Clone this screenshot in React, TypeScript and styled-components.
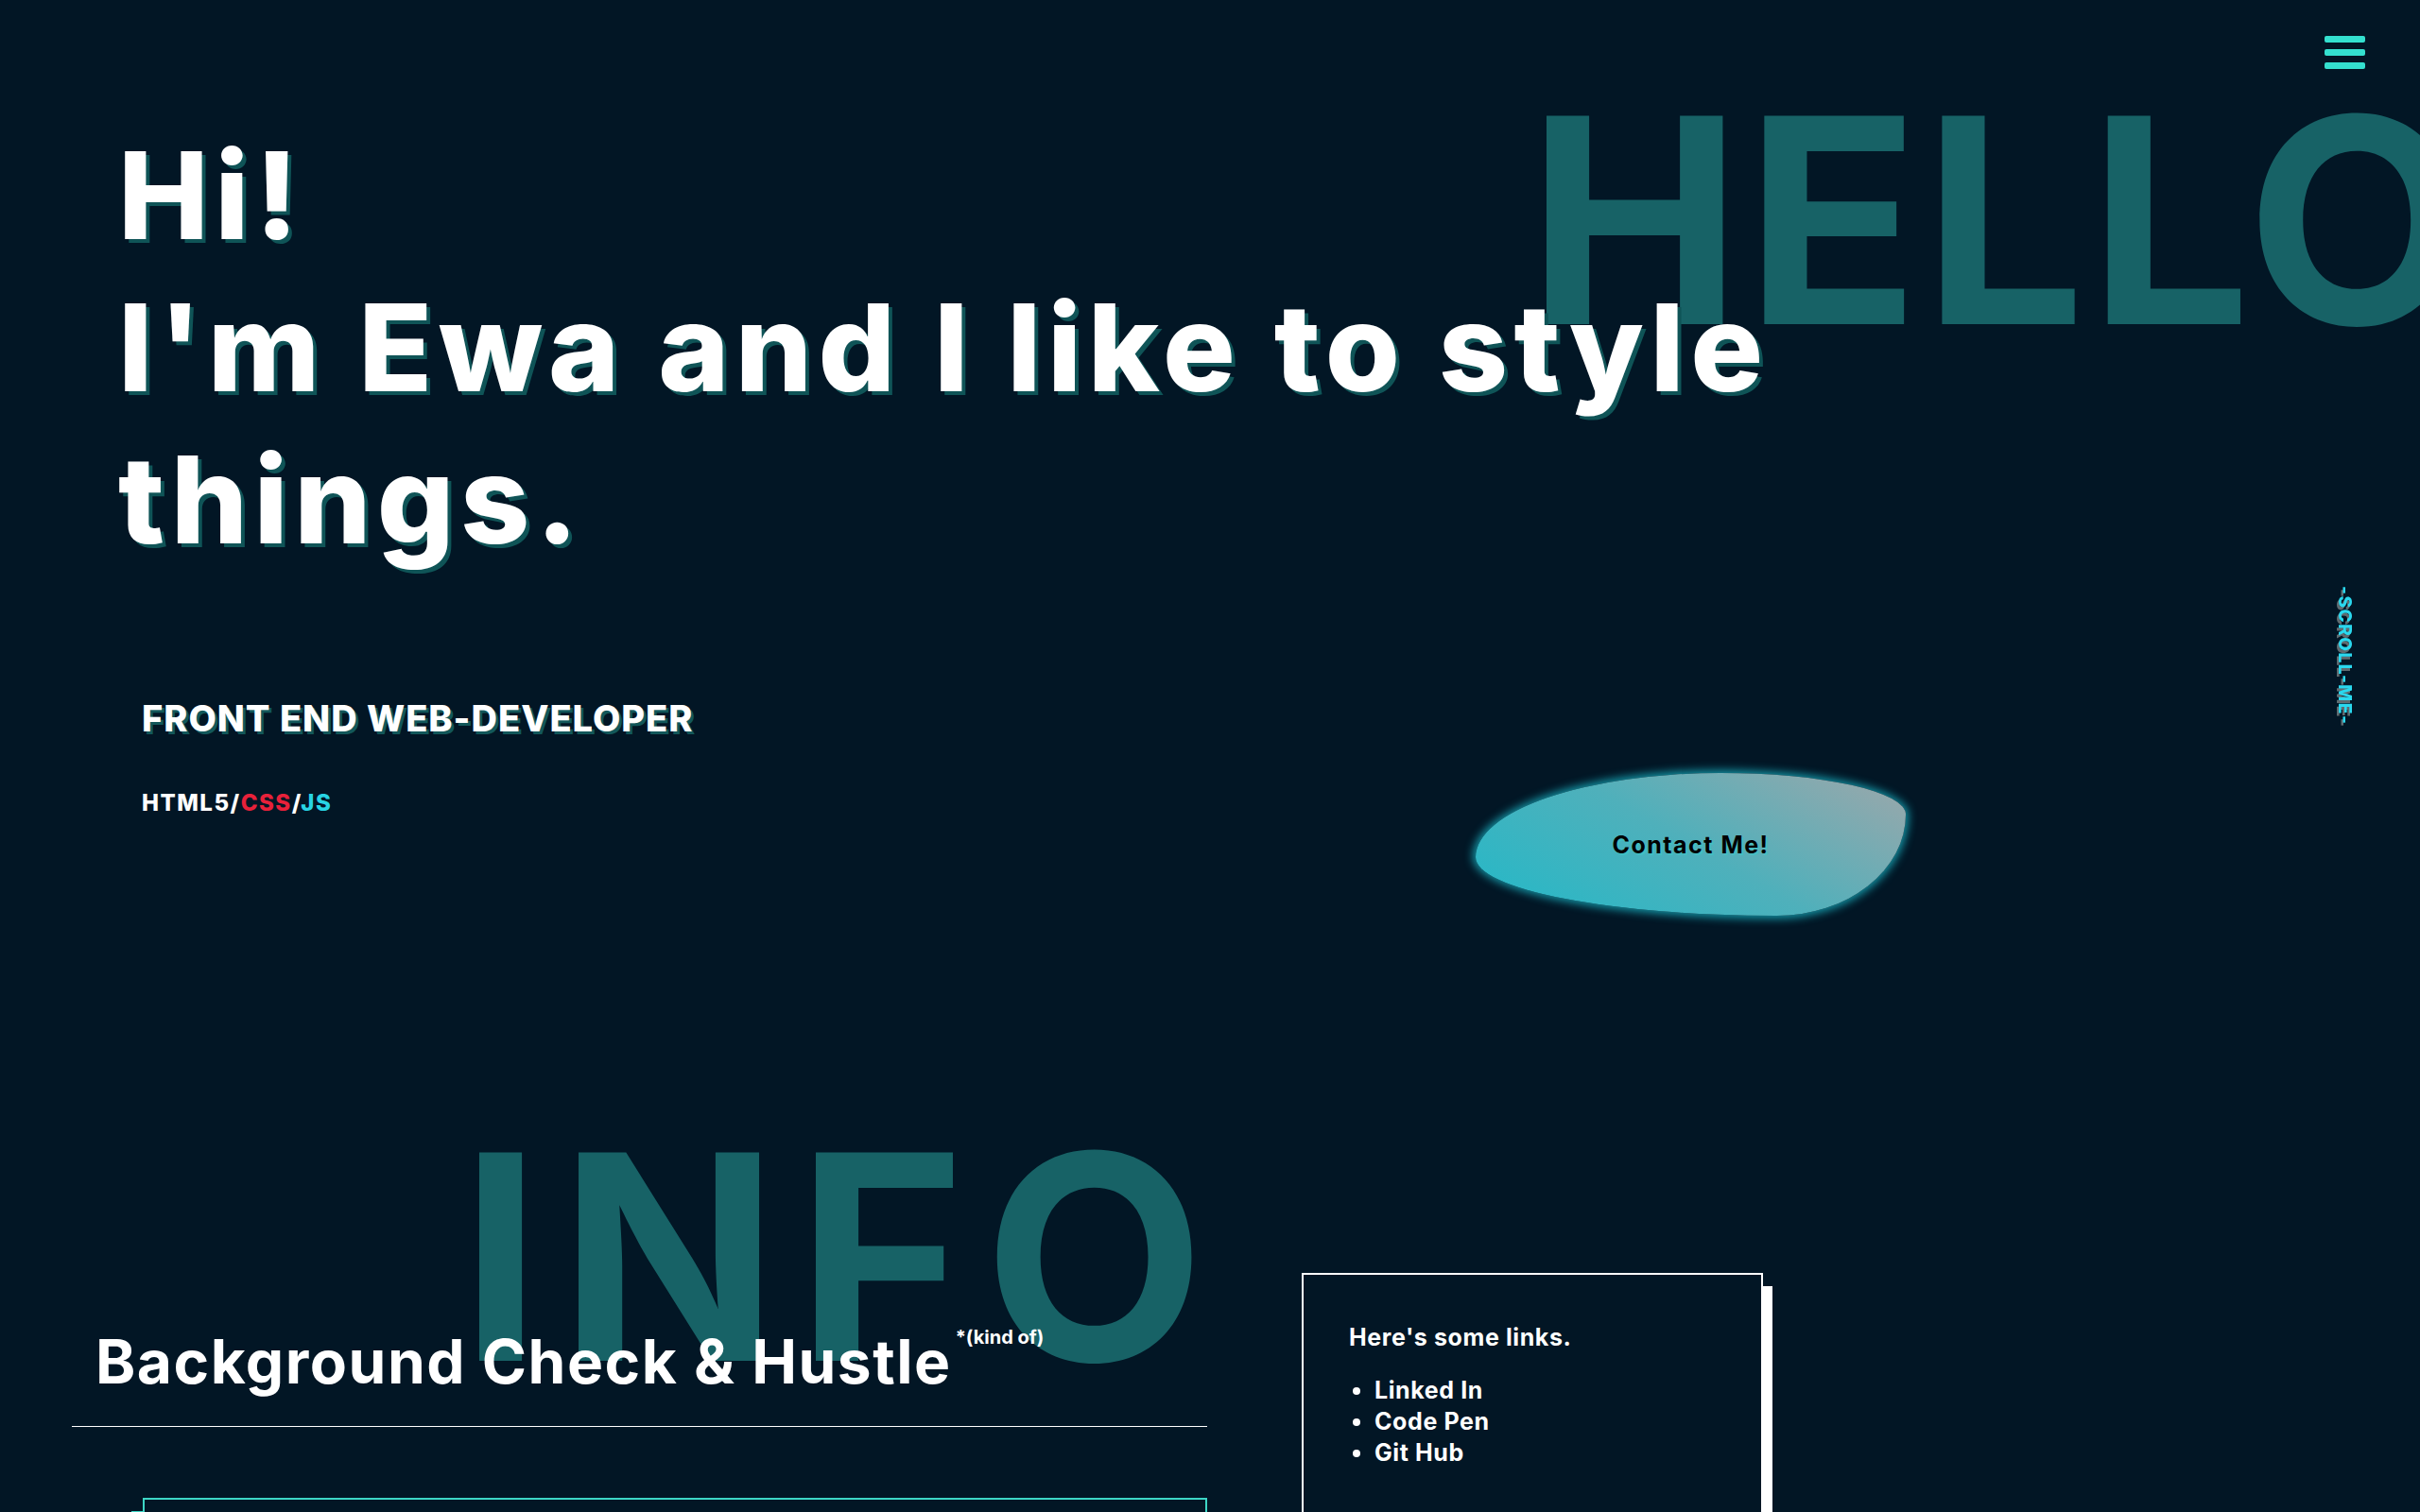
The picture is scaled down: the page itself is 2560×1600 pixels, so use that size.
import React from 'react';
import styled, {createGlobalStyle} from 'styled-components';

const GlobalStyle = createGlobalStyle`
  html, body {
    margin: 0;
    padding: 0;
    background: #021625;
  }
  body {
    font-family: Inter, "Noto Sans", sans-serif;
    color: #fff;
    overflow-x: hidden;
  }
  * {
    box-sizing: border-box;
  }
`;

export default function App() {
    return (
        <Page>
            <GlobalStyle/>
            <Menu aria-label="menu">
                <Bar/>
                <Bar/>
                <Bar/>
            </Menu>
            <ScrollHint>-SCROLL-ME-</ScrollHint>

            <Hero>
                <BigWord $top={81} $left={1616} $spacing={4}>HELLO</BigWord>
                <Greeting>
                    Hi!<br/>
                    I'm Ewa and I like to style<br/>
                    things.
                </Greeting>
                <HeroRow>
                    <Intro>
                        <Role>FRONT END WEB-DEVELOPER</Role>
                        <Skills>HTML5/<Css>CSS</Css>/<Js>JS</Js></Skills>
                    </Intro>
                    <ContactButton>Contact Me!</ContactButton>
                </HeroRow>
            </Hero>

            <Info>
                <BigWord $top={-169} $left={487} $spacing={20}>INFO</BigWord>
                <InfoMain>
                    <InfoTitle>Background Check &amp; Hustle<Note>*(kind of)</Note></InfoTitle>
                    <Divider/>
                    <ExperienceCard/>
                </InfoMain>
                <LinksCard>
                    <LinksTitle>Here's some links.</LinksTitle>
                    <LinkList>
                        <li>Linked In</li>
                        <li>Code Pen</li>
                        <li>Git Hub</li>
                    </LinkList>
                </LinksCard>
            </Info>
        </Page>
    );
}

const Page = styled.div`
  position: relative;
  min-height: 100vh;
  overflow: hidden;
`;

const Menu = styled.button`
  position: fixed;
  top: 38px;
  right: 58px;
  z-index: 5;
  display: flex;
  flex-direction: column;
  gap: 7px;
  padding: 0;
  border: 0;
  background: none;
  cursor: pointer;
`;

const Bar = styled.span`
  display: block;
  width: 43px;
  height: 7px;
  border-radius: 2px;
  background: #34e0cf;
`;

const ScrollHint = styled.div`
  position: fixed;
  top: 620px;
  right: 68px;
  z-index: 5;
  writing-mode: vertical-rl;
  font-size: 19px;
  font-weight: 800;
  letter-spacing: 1.5px;
  color: #2ad8ee;
  text-shadow: 3px 2px 0 #5f6b70;
`;

const BigWord = styled.div<{ $top: number; $left: number; $spacing: number }>`
  position: absolute;
  top: ${p => p.$top}px;
  left: ${p => p.$left}px;
  z-index: 0;
  font-size: 303px;
  font-weight: 700;
  line-height: 1;
  letter-spacing: ${p => p.$spacing}px;
  color: #176266;
  white-space: nowrap;
  pointer-events: none;
  user-select: none;
`;

const Hero = styled.section`
  position: relative;
  padding: 126px 0 0 125px;
`;

const Greeting = styled.h1`
  position: relative;
  z-index: 1;
  margin: 0;
  font-size: 128px;
  font-weight: 800;
  line-height: 161px;
  letter-spacing: 0.05em;
  text-shadow: 4px 4px 0 #0f5457;
`;

const HeroRow = styled.div`
  position: relative;
  z-index: 1;
  display: flex;
  align-items: flex-start;
  margin-top: 129px;
  padding-left: 25px;
`;

const Intro = styled.div`
  width: 1411px;
`;

const Role = styled.h2`
  margin: 0;
  font-size: 38px;
  font-weight: 800;
  line-height: 1.2;
  letter-spacing: 1px;
  text-shadow: 3px 3px 0 #12575a;
`;

const Skills = styled.p`
  margin: 52px 0 0;
  font-size: 24px;
  font-weight: 800;
  line-height: 1.2;
  letter-spacing: 1.5px;
`;

const Css = styled.span`
  color: #e8213a;
`;

const Js = styled.span`
  color: #28d4e4;
`;

const ContactButton = styled.button`
  margin-top: 80px;
  width: 455px;
  height: 151px;
  border: 0;
  border-radius: 57% 43% 30% 70% / 59% 29% 71% 41%;
  background: linear-gradient(30deg, #22b9c8 0%, #4fb0bb 50%, #9ea7aa 100%);
  box-shadow: 0 0 10px 3px #1596a6;
  font-family: Inter, "Noto Sans", sans-serif;
  font-size: 25px;
  font-weight: 700;
  letter-spacing: 1.5px;
  color: #000;
  text-shadow: 2px 2px 0 rgba(60, 200, 200, 0.6);
  cursor: pointer;
`;

const Info = styled.section`
  position: relative;
  display: grid;
  grid-template-columns: 1201px 488px;
  column-gap: 100px;
  align-items: start;
  margin-top: 378px;
  padding-left: 76px;
`;

const InfoMain = styled.div`
  position: relative;
  z-index: 1;
  padding-top: 56px;
`;

const InfoTitle = styled.h2`
  margin: 0;
  padding-left: 25px;
  font-size: 64px;
  font-weight: 700;
  line-height: 1.2;
  letter-spacing: 1.5px;
`;

const Note = styled.span`
  margin-left: 4px;
  font-size: 20px;
  line-height: 1.2;
  letter-spacing: 0;
  vertical-align: top;
`;

const Divider = styled.hr`
  margin: 29px 0 0;
  border: 0;
  height: 1px;
  background: #ffffff;
`;

const ExperienceCard = styled.div`
  margin: 75px 0 0 75px;
  height: 420px;
  border: 2px solid #3dd6c6;
  box-shadow: -12px 14px 0 #3dd6c6;
  background: #021625;
`;

const LinksCard = styled.aside`
  position: relative;
  z-index: 1;
  height: 420px;
  padding: 51px 48px;
  border: 2px solid #ffffff;
  box-shadow: 10px 14px 0 #ffffff;
  background: #021625;
`;

const LinksTitle = styled.h3`
  margin: 0;
  font-size: 25px;
  font-weight: 700;
  line-height: 1.2;
  letter-spacing: 0.6px;
`;

const LinkList = styled.ul`
  margin: 25px 0 0;
  padding-left: 27px;
  font-size: 25px;
  font-weight: 700;
  line-height: 33px;
  letter-spacing: 0.6px;
`;
